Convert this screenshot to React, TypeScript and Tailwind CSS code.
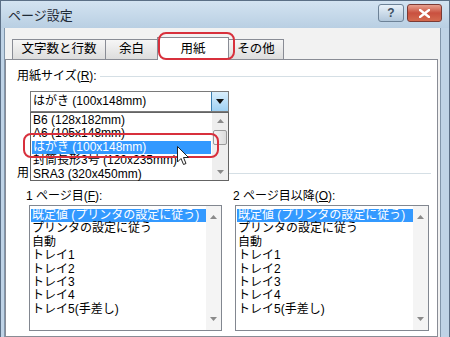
import React from "react";

const font = "font-['Liberation_Sans','Noto_Sans_CJK_JP',sans-serif]";

const trayItems = [
	"既定値 (プリンタの設定に従う)",
	"プリンタの設定に従う",
	"自動",
	"トレイ1",
	"トレイ2",
	"トレイ3",
	"トレイ4",
	"トレイ5(手差し)",
];

const sizeItems = [
	"B6 (128x182mm)",
	"A6 (105x148mm)",
	"はがき (100x148mm)",
	"封筒長形3号 (120x235mm)",
	"SRA3 (320x450mm)",
];

function Tab({ label, width, active }: { label: string; width: number; active?: boolean }) {
	if (active) {
		return (
			<div
				className="relative z-10 -ml-px -mb-px flex h-[23px] items-center justify-center border border-b-0 border-[#898c95] bg-white text-[12.5px]"
				style={{ width }}
			>
				{label}
			</div>
		);
	}
	return (
		<div
			className="-ml-px flex h-[20px] items-center justify-center border border-b-0 border-[#898c95] bg-linear-to-b from-[#f6f6f6] to-[#dddddd] text-[12.5px]"
			style={{ width }}
		>
			{label}
		</div>
	);
}

function Arrow({ dir }: { dir: "up" | "down" }) {
	return (
		<svg width="7" height="4" viewBox="0 0 7 4">
			{dir === "up" ? (
				<path d="M0 4 L3.5 0 L7 4 Z" fill="#8a8a8a" />
			) : (
				<path d="M0 0 L3.5 4 L7 0 Z" fill="#8a8a8a" />
			)}
		</svg>
	);
}

function TrayList() {
	return (
		<div className="flex h-[126px] border border-[#828790] bg-white">
			<div className="flex-1 pl-[1px] pt-[3px]">
				{trayItems.map((t, i) => (
					<div
						key={t}
						className={`h-[13.4px] whitespace-nowrap pl-[1px] text-[12px] leading-[13.4px] ${
							i === 0 ? "bg-[#3399ff] text-white" : "text-black"
						}`}
					>
						{t}
					</div>
				))}
			</div>
			<div className="flex w-[15px] flex-col items-center justify-between bg-[#f4f4f4] py-[9px]">
				<Arrow dir="up" />
				<Arrow dir="down" />
			</div>
		</div>
	);
}

export default function App() {
	return (
		<div className={`relative flex h-[337px] w-[450px] flex-col overflow-hidden border-x border-t border-[#5b6f86] bg-[#bfd3e6] text-black ${font}`}>
			{/* title bar */}
			<div className="flex h-[27px] items-center justify-between bg-linear-to-b from-[#d3e3f1] to-[#b9cfe3] pl-[7px] pr-[7px]">
				<span className="pt-[3px] text-[13px] text-[#1e2a36]">ページ設定</span>
				<div className="flex items-center gap-[3px] self-start pt-[3px]">
					<div className="flex h-[18px] w-[26px] items-center justify-center rounded-[3px] border border-[#6d8297] bg-linear-to-b from-[#e8f1f9] to-[#b2c7db] text-[12px] font-bold text-[#3c4f63]">
						?
					</div>
					<div className="flex h-[18px] w-[35px] items-center justify-center rounded-[3px] border border-[#7b3a34] bg-linear-to-b from-[#e7a08f] via-[#c9503f] to-[#d46a4f]">
						<svg width="11" height="9" viewBox="0 0 11 9">
							<path d="M1 1 L10 8 M10 1 L1 8" stroke="white" strokeWidth="2.4" strokeLinecap="square" />
						</svg>
					</div>
				</div>
			</div>

			{/* client area */}
			<div className="ml-[3px] mr-[8px] flex flex-1 flex-col border-x border-[#8196ab] bg-[#f2f2f2]">
				<div className="flex items-end pl-[8px] pt-[9px]">
					<Tab label="文字数と行数" width={94} />
					<Tab label="余白" width={53} />
					<Tab label="用紙" width={72} active />
					<Tab label="その他" width={56} />
				</div>

				<div className="mr-[2px] flex-1 border border-[#898c95] bg-white pl-[11px] pr-[6px] pt-[9px]">
					<div className="flex h-[14px] items-center gap-[3px] text-[12px]">
						<span className="whitespace-nowrap">
							用紙サイズ(<span className="underline">R</span>):
						</span>
						<div className="h-px flex-1 bg-[#d5dfe5]" />
					</div>

					{/* combobox */}
					<div className="relative z-10 ml-[13px] mt-[8px] flex h-[21px] w-[199px] border border-[#7a7a7a] bg-white">
						<div className="flex-1 pl-[2px] text-[12px] leading-[19px]">はがき (100x148mm)</div>
						<div className="flex w-[17px] items-center justify-center border-l border-[#3c7fb1] bg-linear-to-b from-[#d9eefc] to-[#9fd1f3]">
							<svg width="8" height="5" viewBox="0 0 8 5">
								<path d="M0 0 L4 5 L8 0 Z" fill="#111" />
							</svg>
						</div>

						{/* open dropdown */}
						<div className="absolute left-[-1px] top-[20px] flex h-[69px] w-[199px] border border-[#646464] bg-white">
							<div className="flex-1 pl-[1px] pt-[1px]">
								{sizeItems.map((t, i) => (
									<div
										key={t}
										className={`h-[13.4px] w-[179px] overflow-hidden whitespace-nowrap pl-[1px] text-[12px] leading-[13.4px] ${
											i === 2 ? "bg-[#3399ff] text-white" : "text-black"
										}`}
									>
										{t}
									</div>
								))}
							</div>
							<div className="flex w-[16px] flex-col items-center bg-[#eeeeee] pt-[6px]">
								<Arrow dir="up" />
								<div className="mt-[7px] h-[15px] w-[14px] rounded-[2px] border border-[#9a9a9a] bg-linear-to-r from-[#f4f4f4] to-[#dcdcdc]" />
								<div className="mt-auto mb-[6px]">
									<Arrow dir="down" />
								</div>
							</div>
						</div>
					</div>

					{/* tray section header, mostly hidden under the open dropdown */}
					<div className="mt-[54px] flex h-[14px] items-center text-[12px]">
						<span className="w-[13px] whitespace-nowrap">用</span>
						<div className="h-px flex-1 bg-[#d5dfe5]" />
					</div>

					<div className="ml-[9px] mt-[9px] flex gap-[11px] text-[12px]">
						<div className="w-[196px]">
							<div className="h-[14px] leading-[14px]">
								1 ページ目(<span className="underline">F</span>):
							</div>
							<div className="ml-[3px] mt-[2px]">
								<TrayList />
							</div>
						</div>
						<div className="w-[196px]">
							<div className="h-[14px] leading-[14px]">
								2 ページ目以降(<span className="underline">O</span>):
							</div>
							<div className="ml-[2px] mt-[2px]">
								<TrayList />
							</div>
						</div>
					</div>
				</div>
			</div>

			{/* annotation outlines */}
			<div className="absolute left-[157px] top-[31px] z-20 h-[28px] w-[77px] rounded-[8px] border-2 border-[#d8303c]" />
			<div className="absolute left-[22px] top-[132px] z-20 h-[25px] w-[196px] rounded-[8px] border-2 border-[#d8303c]" />

			{/* mouse cursor */}
			<svg className="absolute left-[176px] top-[145px] z-30" width="13" height="20" viewBox="0 0 13 20">
				<path d="M0.5 0.5 L0.5 16 L4 12.5 L6.5 18.5 L9 17.5 L6.5 11.5 L11.5 11.5 Z" fill="white" stroke="#222" strokeWidth="1" strokeLinejoin="round" />
			</svg>
		</div>
	);
}
